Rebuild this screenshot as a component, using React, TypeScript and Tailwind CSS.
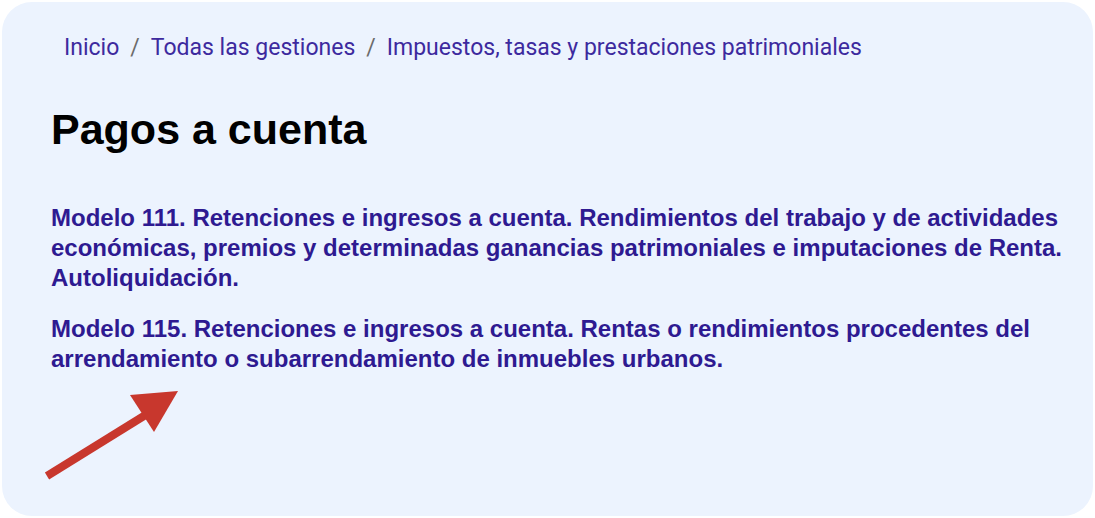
import React from 'react';

const migas = ['Inicio', 'Todas las gestiones', 'Impuestos, tasas y prestaciones patrimoniales'];

const modelos = [
  'Modelo 111. Retenciones e ingresos a cuenta. Rendimientos del trabajo y de actividades económicas, premios y determinadas ganancias patrimoniales e imputaciones de Renta. Autoliquidación.',
  'Modelo 115. Retenciones e ingresos a cuenta. Rentas o rendimientos procedentes del arrendamiento o subarrendamiento de inmuebles urbanos.',
];

export default function App() {
  return (
    <div className="w-[1095px] h-[518px] bg-white p-[2px]">
      <div className="relative h-full rounded-[30px] bg-[#ecf3fe] pl-[49px] pr-[12px] pt-[31px]">
        {/* Migas de pan */}
        <nav className="pl-[13px] flex items-center text-[23px] leading-[30px] text-[#3d2a9e] font-['Roboto',sans-serif]">
          {migas.map((m, i) => (
            <React.Fragment key={m}>
              {i > 0 && <span className="mx-[11px] text-[#6b6b6b]">/</span>}
              <span>{m}</span>
            </React.Fragment>
          ))}
        </nav>

        <h1 className="mt-[41px] text-[43px] leading-[50px] font-bold text-black font-['Liberation_Sans',Arial,sans-serif]">
          Pagos a cuenta
        </h1>

        <ul className="mt-[49px] space-y-[21px] font-['Liberation_Sans',Arial,sans-serif]">
          {modelos.map((t, i) => (
            <li key={t} className={i === 1 ? 'max-w-[990px] text-[24px] leading-[30px] font-bold text-[#2e1a91]' : 'text-[24px] leading-[30px] font-bold text-[#2e1a91]'}>
              {t}
            </li>
          ))}
        </ul>

        {/* Flecha */}
        <svg className="absolute left-[40px] top-[384px]" width="150" height="100" viewBox="0 0 150 100">
          <line x1="5" y1="90" x2="118" y2="20" stroke="#c8372d" strokeWidth="8" />
          <polygon points="136,5 88,9 112,46" fill="#c8372d" />
        </svg>
      </div>
    </div>
  );
}
